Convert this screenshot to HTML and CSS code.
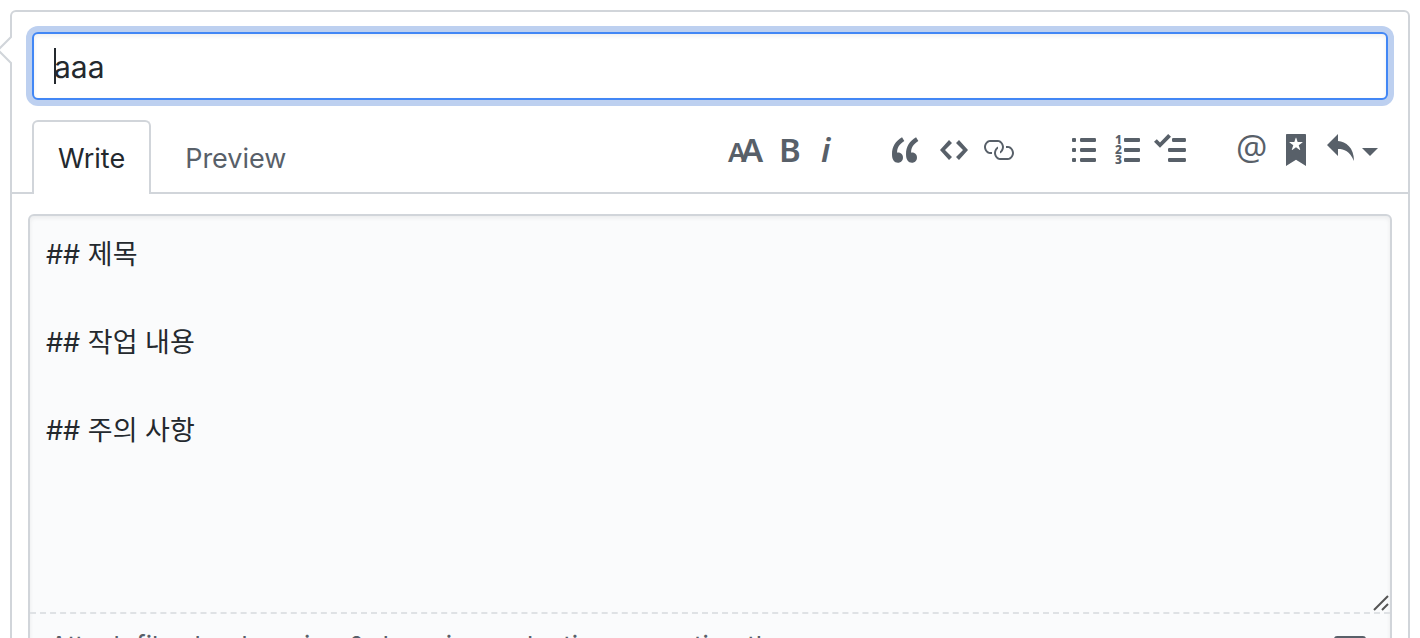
FILE: index.html
```
<!DOCTYPE html>
<html lang="en">
<head>
    <meta charset="UTF-8">
    <meta name="viewport" content="width=device-width, initial-scale=1.0">
    <title>New pull request</title>
    <link rel="stylesheet" href="styles.css">
</head>
<body>
    <form class="comment-box">
        <svg class="pointer" viewBox="0 0 12 30" aria-hidden="true"><path class="pointer-fill" d="M12 1L-2 15l14 14z"/><path class="pointer-line" d="M12 1L-2 15l14 14"/></svg>

        <div class="title-field">
            <input class="title-input" type="text" value="aaa" aria-label="Title">
            <span class="text-cursor"></span>
        </div>

        <div class="tab-bar">
            <div class="tabs" role="tablist">
                <button class="tab selected" type="button" role="tab" aria-selected="true">Write</button>
                <button class="tab" type="button" role="tab" aria-selected="false">Preview</button>
            </div>

            <div class="toolbar">
                <div class="tool-group">
                    <button class="tool" type="button" aria-label="Add header text">
                        <svg width="36" height="32" viewBox="0 0 36 32"><text class="glyph small-a" x="0" y="28">A</text><text class="glyph" x="13" y="28">A</text></svg>
                    </button>
                    <button class="tool" type="button" aria-label="Add bold text">
                        <svg width="20" height="32" viewBox="0 0 20 32"><text class="glyph" x="-1" y="28">B</text></svg>
                    </button>
                    <button class="tool" type="button" aria-label="Add italic text">
                        <svg width="36" height="32" viewBox="0 0 36 32"><text class="glyph italic" x="5" y="28">i</text></svg>
                    </button>
                </div>
                <div class="tool-group insert-tools">
                    <button class="tool" type="button" aria-label="Insert a quote">
                        <svg width="36" height="32" viewBox="0 0 18 16"><path d="M6.16 3.5C3.73 5.06 2.55 6.67 2.55 9.36c.16-.05.3-.05.44-.05 1.27 0 2.5.86 2.5 2.41 0 1.61-1.03 2.61-2.5 2.61-1.9 0-2.99-1.52-2.99-4.25 0-3.8 1.75-6.53 5.02-8.42L6.16 3.5zm7 0c-2.43 1.56-3.61 3.17-3.61 5.86.16-.05.3-.05.44-.05 1.27 0 2.5.86 2.5 2.41 0 1.61-1.03 2.61-2.5 2.61-1.89 0-2.98-1.52-2.98-4.25 0-3.8 1.75-6.53 5.02-8.42l1.14 1.84h-.01z"/></svg>
                    </button>
                    <button class="tool" type="button" aria-label="Insert code">
                        <svg width="28" height="32" viewBox="0 0 14 16"><path d="M9.5 3L8 4.5 11.5 8 8 11.5 9.5 13 14 8 9.5 3zm-5 0L0 8l4.5 5L6 11.5 2.5 8 6 4.5 4.5 3z"/></svg>
                    </button>
                    <button class="tool" type="button" aria-label="Add a link">
                        <svg width="32" height="32" viewBox="0 0 16 16"><path d="M4 9h1v1H4c-1.5 0-3-1.69-3-3.5S2.55 3 4 3h4c1.45 0 3 1.69 3 3.5 0 1.41-.91 2.72-2 3.25V8.59c.58-.45 1-1.27 1-2.09C10 5.22 8.98 4 8 4H4c-.98 0-2 1.22-2 2.5S3 9 4 9zm9-3h-1v1h1c1 0 2 1.22 2 2.5S13.98 12 13 12H9c-.98 0-2-1.22-2-2.5 0-.83.42-1.64 1-2.09V6.25c-1.09.53-2 1.84-2 3.25C6 11.31 7.55 13 9 13h4c1.45 0 3-1.69 3-3.5S14.5 6 13 6z"/></svg>
                    </button>
                </div>
                <div class="tool-group">
                    <button class="tool" type="button" aria-label="Add a bulleted list">
                        <svg width="24" height="32" viewBox="0 0 12 16"><rect y="2" width="2" height="2" rx=".5"/><rect y="7" width="2" height="2" rx=".5"/><rect y="12" width="2" height="2" rx=".5"/><rect x="4" y="2" width="8" height="2" rx=".6"/><rect x="4" y="7" width="8" height="2" rx=".6"/><rect x="4" y="12" width="8" height="2" rx=".6"/></svg>
                    </button>
                    <button class="tool" type="button" aria-label="Add a numbered list">
                        <svg width="24" height="32" viewBox="0 0 24 32"><text class="digit" x="-1" y="10">1</text><text class="digit" x="-1" y="20">2</text><text class="digit" x="-1" y="30">3</text><rect x="8" y="4" width="16" height="4" rx="1"/><rect x="8" y="14" width="16" height="4" rx="1"/><rect x="8" y="24" width="16" height="4" rx="1"/></svg>
                    </button>
                    <button class="tool" type="button" aria-label="Add a task list">
                        <svg width="36" height="32" viewBox="0 0 18 16"><path d="M15.41 9H7.59C7 9 7 8.59 7 8c0-.59 0-1 .59-1h7.81c.59 0 .59.41.59 1 0 .59 0 1-.59 1h.01zM9.59 4C9 4 9 3.59 9 3c0-.59 0-1 .59-1h5.81c.59 0 .59.41.59 1 0 .59 0 1-.59 1H9.59zM0 3.91l1.41-1.3L3 4.2 7.09 0 8.5 1.41 3 6.91l-3-3zM7.59 12h7.81c.59 0 .59.41.59 1 0 .59 0 1-.59 1H7.59C7 14 7 13.59 7 13c0-.59 0-1 .59-1z"/></svg>
                    </button>
                </div>
                <div class="tool-group">
                    <button class="tool" type="button" aria-label="Mention a user or team">
                        <svg width="30" height="32" viewBox="0 0 30 32"><text class="at" x="-1" y="26">@</text></svg>
                    </button>
                    <button class="tool" type="button" aria-label="Reference an issue or pull request">
                        <svg width="20" height="32" viewBox="0 0 10 16"><path d="M9.5 0h-9C.2 0 0 .2 0 .5V16l5-3.09L10 16V.5c0-.3-.2-.5-.5-.5zM8.22 4.25L6.36 5.61l.72 2.16c.06.22-.02.28-.2.17L5 6.6 3.12 7.94c-.19.11-.25.05-.2-.17l.72-2.16-1.86-1.36c-.17-.16-.14-.23.09-.23l2.3-.03.7-2.16h.25l.7 2.16 2.3.03c.23 0 .27.08.09.23h.01z"/></svg>
                    </button>
                    <button class="tool reply" type="button" aria-label="Insert a reply">
                        <svg width="28" height="32" viewBox="0 0 14 16"><path d="M6 3.5c3.92.44 8 3.125 8 10-2.312-5.062-4.75-6-8-6V11L.5 5.5 6 0v3.5z"/></svg>
                        <span class="dropdown-caret"></span>
                    </button>
                </div>
            </div>
        </div>

        <div class="editor">
            <div class="body-field">
                <textarea class="body-input" aria-label="Comment body">## 제목

## 작업 내용

## 주의 사항</textarea>
                <svg class="resize-grip" width="16" height="16" viewBox="0 0 16 16" aria-hidden="true"><path d="M1 15L15 1M9 15l6-6"/></svg>
            </div>
            <div class="attach">
                <span>Attach files by dragging &amp; dropping, selecting or pasting them.</span>
                <a class="markdown-link" href="#" aria-label="Styling with Markdown is supported">
                    <svg width="32" height="32" viewBox="0 0 32 32"><rect x="1" y="7" width="30" height="18" rx="2"/><path d="M7 20v-8l4 4 4-4v8M23 12v7M20 16l3 4 3-4"/></svg>
                </a>
            </div>
        </div>
    </form>
</body>
</html>
```
FILE: styles.css
```
* {
    box-sizing: border-box;
}
body {
    margin: 0;
    padding: 10px 10px 0;
    height: 100vh;
    overflow: hidden;
    background-color: #fff;
    color: #24292e;
    font-family: Inter, "Noto Sans CJK KR", sans-serif;
}
button,
input,
textarea {
    font-family: inherit;
    color: inherit;
}
.comment-box {
    position: relative;
    border: 2px solid #d1d5da;
    border-radius: 6px;
    padding-bottom: 20px;
}
.pointer {
    position: absolute;
    left: -12px;
    top: 23px;
    width: 12px;
    height: 30px;
}
.pointer-fill {
    fill: #fff;
}
.pointer-line {
    fill: none;
    stroke: #d1d5da;
    stroke-width: 2;
}

/* title */
.title-field {
    position: relative;
    margin: 20px;
}
.title-input {
    display: block;
    width: 100%;
    height: 68px;
    padding: 2px 20px 0;
    border: 2px solid #4287f5;
    border-radius: 6px;
    outline: none;
    background-color: #fff;
    box-shadow: inset 0 2px 4px rgba(27, 31, 35, 0.07), 0 0 0 6px #bdd0f0;
    font-size: 30px;
}
.text-cursor {
    position: absolute;
    left: 22px;
    top: 16px;
    width: 2px;
    height: 36px;
    background-color: #24292e;
}

/* tabs and toolbar */
.tab-bar {
    display: flex;
    justify-content: space-between;
    padding: 0 20px;
    border-bottom: 2px solid #d1d5da;
}
.tabs {
    display: flex;
    margin-bottom: -2px;
}
.tab {
    height: 74px;
    padding: 0 24px;
    border: 2px solid transparent;
    border-bottom: 0;
    background: none;
    color: #586069;
    font-size: 27px;
    cursor: pointer;
}
.tab.selected {
    margin-right: 8px;
    border-color: #d1d5da;
    border-radius: 6px 6px 0 0;
    background-color: #fff;
    color: #24292e;
}
.toolbar {
    display: flex;
    align-items: flex-start;
    padding: 14px 10px 0 0;
}
.tool-group {
    display: flex;
}
.tool-group:last-child {
    margin-left: 36px;
}
.insert-tools {
    margin: 0 42px 0 32px;
}
.tool {
    display: flex;
    justify-content: center;
    width: 44px;
    padding: 0;
    border: 0;
    background: none;
    color: #586069;
    cursor: pointer;
}
.tool svg {
    display: block;
    flex: none;
    fill: currentColor;
    overflow: visible;
}
.tool.reply {
    align-items: center;
    width: auto;
    gap: 8px;
    padding-left: 8px;
}
.dropdown-caret {
    border: 8px solid transparent;
    border-top-color: currentColor;
    border-bottom: 0;
    margin-top: 4px;
}
.glyph {
    font: 600 33px "Noto Sans", sans-serif;
}
.small-a {
    font-size: 27px;
}
.italic {
    font-style: italic;
}
.digit {
    font: 800 12px "Noto Sans", sans-serif;
}
.at {
    font: 400 35px "Open Sans", sans-serif;
}

/* comment body */
.editor {
    margin: 20px 16px 0;
    border: 2px solid #d1d5da;
    border-radius: 6px;
    background-color: #fafbfc;
    box-shadow: inset 0 2px 4px rgba(27, 31, 35, 0.07);
}
.body-field {
    position: relative;
    border-bottom: 2px dashed #dfe2e5;
}
.body-input {
    display: block;
    width: 100%;
    height: 396px;
    padding: 17px 16px;
    border: 0;
    outline: none;
    background: none;
    resize: none;
    font-size: 27px;
    line-height: 44px;
}
.resize-grip {
    position: absolute;
    right: 1px;
    bottom: 1px;
    fill: none;
    stroke: #555;
    stroke-width: 2;
}
.attach {
    display: flex;
    justify-content: space-between;
    align-items: center;
    padding: 14px 24px 14px 20px;
    color: #586069;
    font-size: 26px;
    line-height: 36px;
}
.markdown-link {
    color: inherit;
}
.markdown-link svg {
    display: block;
    fill: none;
    stroke: currentColor;
    stroke-width: 2;
}
```
